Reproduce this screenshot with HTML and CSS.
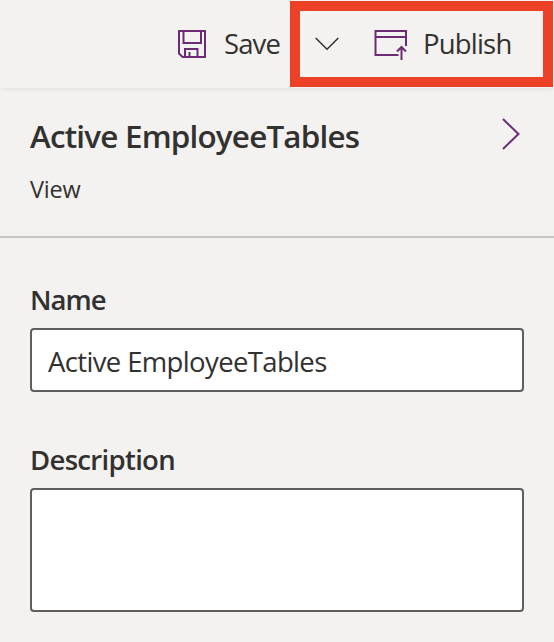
FILE: index.html
```html
<!DOCTYPE html>
<html lang="en">
<head>
<meta charset="utf-8">
<title>Active EmployeeTables</title>
<link rel="stylesheet" href="styles.css">
</head>
<body>
<header class="toolbar">
  <div class="save">
    <svg class="icon-save" width="28" height="28" viewBox="0 0 28 28" fill="none" stroke="#6c2c74" stroke-width="2"><path d="M1 1H27V27H4.500L1 23.500ZM5.500 1V13H23V1M7 27V19H19.500V27M11.500 27V22"/></svg>
    <span class="save-label">Save</span>
  </div>
  <div class="highlight">
    <svg class="icon-down" width="24" height="14" viewBox="0 0 24 14" fill="none" stroke="#323130" stroke-width="1.5"><path d="M.7 1L12 12.3L23.3 1"/></svg>
    <svg class="icon-publish" width="34" height="32" viewBox="0 0 34 32" fill="none" stroke="#6c2c74" stroke-width="2"><path d="M24.500 27H1.500V3H32V18M2 9H32M27.500 32V19M23 23.500L27.500 19L32 23.500"/></svg>
    <span class="publish-label">Publish</span>
  </div>
</header>
<section class="heading">
  <div>
    <h1>Active EmployeeTables</h1>
    <p>View</p>
  </div>
  <svg class="icon-right" width="20" height="34" viewBox="0 0 20 34" fill="none" stroke="#6c2c74" stroke-width="2"><path d="M2 2L17.500 17L2 32"/></svg>
</section>
<main class="form">
  <label class="name-label" for="name">Name</label>
  <input id="name" type="text" value="Active EmployeeTables">
  <label class="description-label" for="description">Description</label>
  <textarea id="description"></textarea>
</main>
</body>
</html>
```
FILE: styles.css
```css
* { box-sizing: border-box; }
body {
  margin: 0;
  height: 642px;
  overflow: hidden;
  background: #f3f2f1;
  color: #323130;
  font: 27.5px/36px "Open Sans", "Noto Sans", sans-serif;
}
svg { display: block; flex: none; }
.toolbar {
  height: 88px;
  display: flex;
  justify-content: flex-end;
  padding: 1px 1px 1px 0;
  box-shadow: 0 1px 6px rgba(0, 0, 0, .08);
}
.save { display: flex; align-items: center; width: 112px; }
.save-label { margin-left: 18px; padding-bottom: 1px; letter-spacing: -.9px; }
.highlight {
  display: flex;
  align-items: center;
  width: 263px;
  height: 86px;
  border: 10px solid #ec4027;
  padding-left: 15px;
}
.icon-publish { margin-left: 35px; }
.publish-label { margin-left: 15px; padding-bottom: 1px; letter-spacing: -.8px; }
.heading {
  height: 150px;
  display: flex;
  justify-content: space-between;
  align-items: flex-start;
  padding: 28px 33px 0 30px;
  border-bottom: 2px solid #c8c6c4;
}
h1 { margin: 0; font-size: 31.4px; font-weight: 600; line-height: 40px; letter-spacing: -.8px; }
p { margin: 17px 0 0; font-size: 23.5px; line-height: 32px; letter-spacing: -.2px; }
.icon-right { margin-top: 1px; }
.form { display: flex; flex-direction: column; padding: 44px 30px 0; }
label { font-weight: 600; }
.name-label { letter-spacing: -1px; }
input, textarea {
  display: block;
  width: 100%;
  margin: 10px 0 0;
  border: 2px solid #605e5c;
  border-radius: 4px;
  background: #fff;
  color: inherit;
  font: inherit;
  resize: none;
  outline: none;
}
input { height: 64px; padding: 2px 16px 0; letter-spacing: -.64px; }
.description-label { margin-top: 50px; letter-spacing: -.68px; }
textarea { height: 124px; padding: 8px 16px; }
```
